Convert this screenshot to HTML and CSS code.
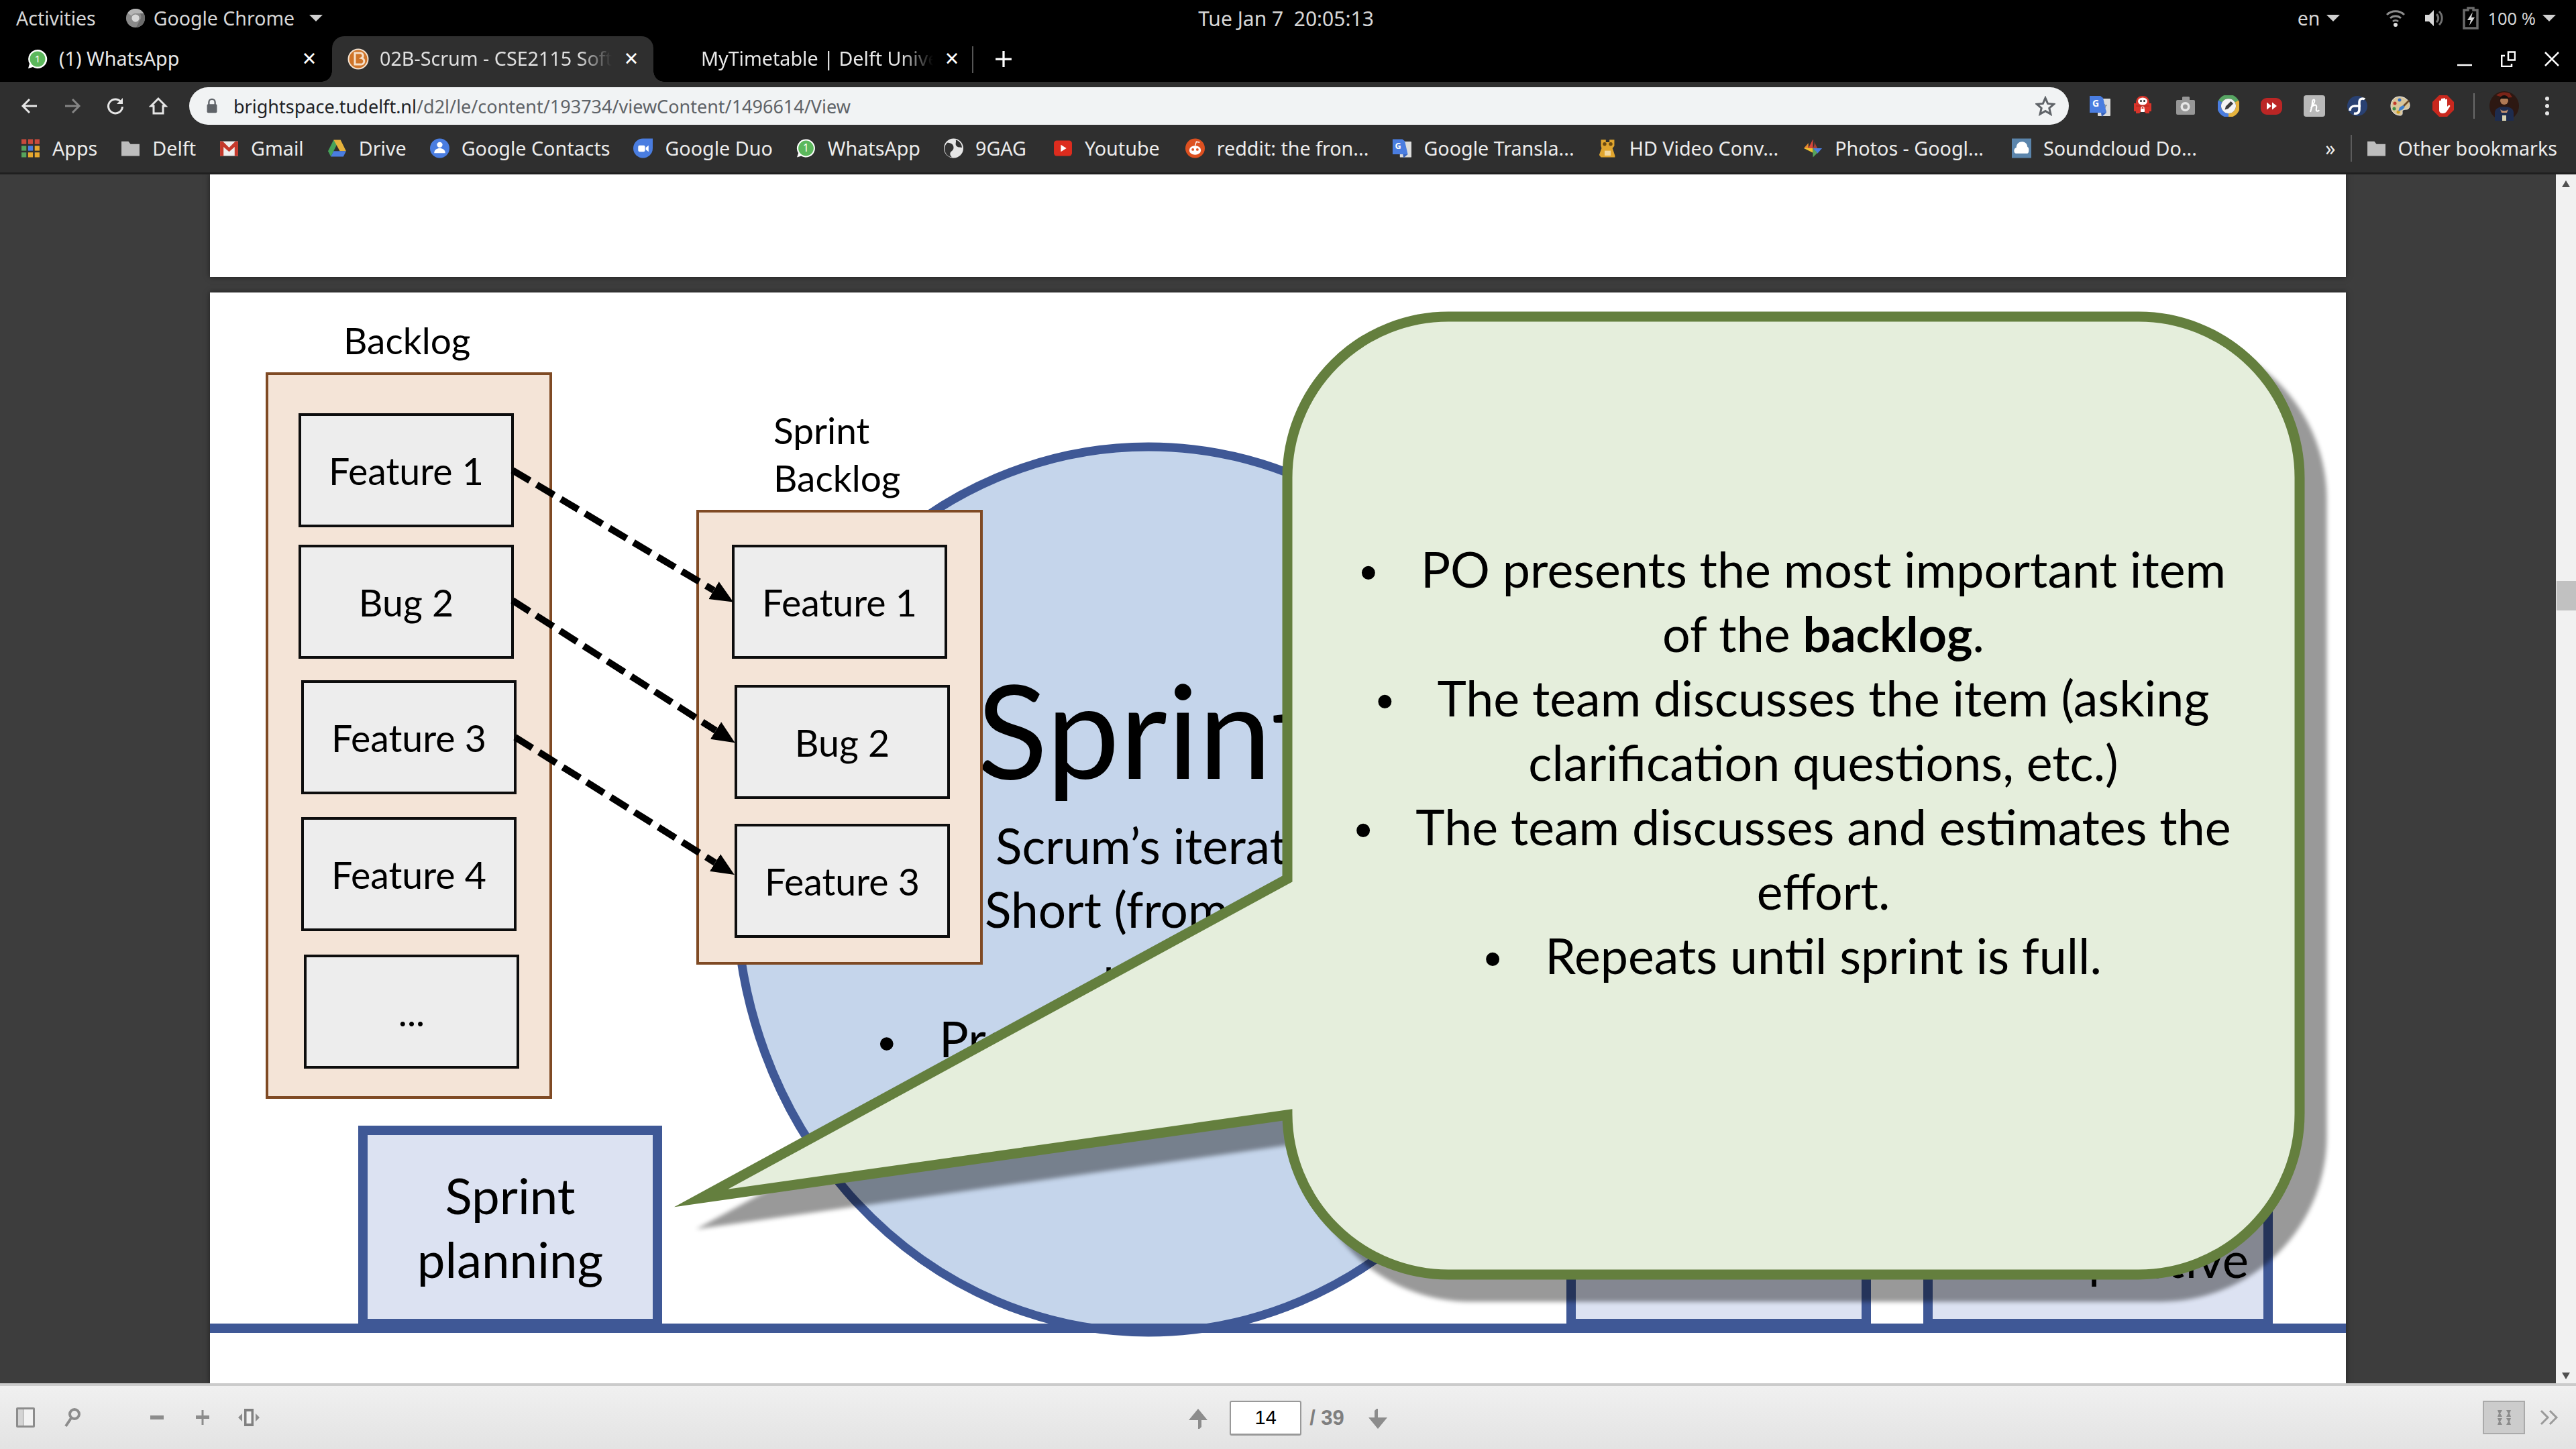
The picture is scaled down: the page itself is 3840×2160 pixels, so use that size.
FILE: index.html
```html
<!DOCTYPE html>
<html lang="en">
<head>
<meta charset="utf-8">
<title>02B-Scrum - CSE2115 Software</title>
<link rel="stylesheet" href="styles.css">
</head>
<body>
<header class="topbar">
  <div class="tb-left">
    <span class="tb-text">Activities</span>
    <span class="tb-app">
      <svg class="ic-chrome" viewBox="0 0 32 32"><circle cx="16" cy="16" r="15" fill="#8a8a8a"/><path d="M16 1a15 15 0 0 1 13 7.500H16a7.500 7.500 0 0 0-6.500 3.800L3.500 8A15 15 0 0 1 16 1z" fill="#b5b5b5"/><path d="M29 8.500A15 15 0 0 1 17 31l6-12a7.500 7.500 0 0 0 0-10.500z" fill="#6c6c6c"/><circle cx="16" cy="16" r="6" fill="#d8d8d8"/></svg>
      <span class="tb-text">Google Chrome</span><i class="tri"></i>
    </span>
  </div>
  <div class="tb-clock">Tue Jan 7&nbsp; 20:05:13</div>
  <div class="tb-right">
    <span class="tb-text">en</span><i class="tri tri-en"></i>
    <svg class="ic-wifi" viewBox="0 0 30 30"><path d="M2 10a19 19 0 0 1 26 0M7 15a12 12 0 0 1 16 0M11 20a6 6 0 0 1 8 0" fill="none" stroke="#8d8d8d" stroke-width="3"/><circle cx="15" cy="25" r="3" fill="#e0e0e0"/></svg>
    <svg class="ic-vol" viewBox="0 0 30 30"><path d="M3 10h6l7-7v24l-7-7H3z" fill="#d8d8d8"/><path d="M20 9a8 8 0 0 1 0 12M24 5a14 14 0 0 1 0 20" fill="none" stroke="#6f6f6f" stroke-width="3"/></svg>
    <svg class="ic-batt" viewBox="0 0 24 34"><path d="M8 2h8v3h6v27H2V5h6z" fill="none" stroke="#6a6a6a" stroke-width="3.500"/><path d="M15 8l-8 12h5l-2 8 8-12h-5z" fill="#d8d8d8"/></svg>
    <span class="tb-text tb-pct">100 %</span><i class="tri"></i>
  </div>
</header>

<nav class="tabstrip">
  <div class="tab tab-wa">
    <svg class="fav" viewBox="0 0 32 32"><path d="M16 2a14 14 0 0 0-12 21L2 30l7-2A14 14 0 1 0 16 2z" fill="#fff"/><circle cx="16" cy="16" r="11.500" fill="#5cb85c"/><text class="wa-one" x="16" y="21" text-anchor="middle">1</text></svg>
    <span class="tab-title">(1) WhatsApp</span>
    <span class="tab-x">×</span>
  </div>
  <div class="tab tab-active">
    <svg class="fav" viewBox="0 0 32 32"><circle cx="16" cy="16" r="15.500" fill="#f3e2d0"/><circle cx="16" cy="16" r="13.500" fill="#cf7429"/><path d="M11 7h8a4 4 0 0 1 2 7.500 4.500 4.500 0 0 1-2 9.500h-8z" fill="none" stroke="#f6dfc8" stroke-width="3"/></svg>
    <span class="tab-title fade">02B-Scrum - CSE2115 Software</span>
    <span class="tab-x">×</span>
  </div>
  <div class="tab tab-tt">
    <span class="tab-title fade">MyTimetable | Delft University</span>
    <span class="tab-x">×</span>
  </div>
  <i class="tab-sep"></i>
  <svg class="tab-plus" viewBox="0 0 24 24"><path d="M12 1v22M1 12h22" stroke="#fff" stroke-width="3"/></svg>
  <div class="win-ctl">
    <svg viewBox="0 0 22 24"><path d="M0 21h22" stroke="#fff" stroke-width="2.500"/></svg>
    <svg viewBox="0 0 22 24"><path d="M11 1.500h10v12H11zM6 7H1.200v16H16v-4" fill="none" stroke="#fff" stroke-width="2.500"/></svg>
    <svg viewBox="0 0 22 24"><path d="M1 2l20 20M21 2L1 22" stroke="#fff" stroke-width="2.500"/></svg>
  </div>
</nav>

<div class="toolbar">
  <svg class="nav" viewBox="0 0 28 28"><path d="M25 14H5M14 4L4 14l10 10" fill="none" stroke="#e6e6e6" stroke-width="3"/></svg>
  <svg class="nav" viewBox="0 0 28 28"><path d="M3 14h20M14 4l10 10-10 10" fill="none" stroke="#858585" stroke-width="3"/></svg>
  <svg class="nav" viewBox="0 0 28 28"><path d="M23 9a10.500 10.500 0 1 0 1.500 6" fill="none" stroke="#e6e6e6" stroke-width="3"/><path d="M25 2v9h-9z" fill="#e6e6e6"/></svg>
  <svg class="nav" viewBox="0 0 28 28"><path d="M14 3L3 14h4v11h14V14h4z" fill="none" stroke="#e6e6e6" stroke-width="3"/></svg>
  <div class="omni">
    <svg class="lock" viewBox="0 0 20 28"><path d="M5 12V8a5 5 0 0 1 10 0v4" fill="none" stroke="#5f6368" stroke-width="2.500"/><rect x="2" y="11" width="16" height="14" rx="2" fill="#5f6368"/></svg>
    <span class="url"><b>brightspace.tudelft.nl</b>/d2l/le/content/193734/viewContent/1496614/View</span>
    <svg class="star" viewBox="0 0 30 30"><path d="M15 3l3.600 8.400 9.100.800-6.900 6 2.100 8.900-7.900-4.700-7.900 4.700 2.100-8.900-6.900-6 9.100-.800z" fill="none" stroke="#5f6368" stroke-width="3"/></svg>
  </div>
  <div class="exts">
    <svg viewBox="0 0 32 32"><rect x="13" y="5" width="19" height="26" rx="1" fill="#dcdcdc"/><path d="M23 13v2M19 15h8M25 15c-1 5-4 8-6 9M20 18c1 3 4 5 6 6" fill="none" stroke="#8b939c" stroke-width="1.600"/><path d="M1 1h16l4 3 5 22-20 0H1z" fill="#4a7de0"/><path d="M18 26h8l-7 6z" fill="#3a63b8"/><text class="ext-g" x="5" y="17">G</text></svg>
    <svg viewBox="0 0 32 32"><path d="M16 1c-6 0-9 3-10 9v2H3v12h3v3h5l2-2h6l2 2h5v-3h3V12h-3v-2C25 4 22 1 16 1z" fill="#d8342a"/><ellipse cx="16" cy="9" rx="7" ry="5.500" fill="#fff"/><circle cx="13.500" cy="8.500" r="1.500" fill="#222"/><circle cx="18.500" cy="8.500" r="1.500" fill="#222"/><path d="M6 16h20" stroke="#a8241c" stroke-width="1"/><rect x="13" y="20" width="6" height="5" rx="1" fill="#fff"/><path d="M14 20v-1a2 2 0 0 1 4 0v1" fill="none" stroke="#fff" stroke-width="1.200"/></svg>
    <svg viewBox="0 0 32 32"><path d="M2 9a2 2 0 0 1 2-2h7V3a2 2 0 0 1 2-1h7a2 2 0 0 1 2 1v4h6a2 2 0 0 1 2 2v18a2 2 0 0 1-2 2H4a2 2 0 0 1-2-2z" fill="#979797"/><circle cx="15.500" cy="17" r="7" fill="#e6e6e6"/><circle cx="15.500" cy="17" r="3.500" fill="#979797"/></svg>
    <svg viewBox="0 0 32 32"><g fill="none" stroke-width="6"><path d="M3.800 9a14 14 0 0 1 24.400 0" stroke="#57a663"/><path d="M28.200 9A14 14 0 0 1 16 30" stroke="#e6b33c"/><path d="M16 30A14 14 0 0 1 3.800 9" stroke="#4a7de0"/></g><circle cx="16" cy="16" r="11" fill="#f4f4f4"/><path d="M10.500 21.500l1.500-5 7.500-7.500 3.500 3.500-7.500 7.500z" fill="#3b3b3b"/></svg>
    <svg viewBox="0 0 32 32"><rect x="0" y="4" width="32" height="25" rx="9" fill="#bb2625"/><path d="M9 10.500l7 5.500-7 5.500zM17 10.500l7 5.500-7 5.500z" fill="#fff"/></svg>
    <svg viewBox="0 0 32 32"><rect width="32" height="32" rx="4" fill="#b9b9b9"/><path d="M10 25c2-6 3-11 3-15 0-3 2-4 3-3 2 2-3 8-5 12 2-4 7-6 8-3 1 2-1 5 0 7 1 1 3 1 4-1" fill="none" stroke="#fff" stroke-width="2.200"/></svg>
    <svg viewBox="0 0 32 32"><circle cx="16" cy="16" r="15" fill="#294172"/><path d="M5 23c0-4 3-7 7-7h9M11 27c5 1 8-1 8-6V10c0-3 2-5 5-5 2 0 3 1 3 1" fill="none" stroke="#fff" stroke-width="3.600"/></svg>
    <svg viewBox="0 0 32 32"><path d="M15 2C6 2 2 9 2 16c0 9 7 14 14 14 4 0 3-4 3-6s3-3 6-3 5-2 5-6C30 8 23 2 15 2z" fill="#d9c59a" stroke="#eee" stroke-width="1"/><circle cx="15" cy="7" r="2.500" fill="#2f6cc4"/><circle cx="8" cy="12" r="2.500" fill="#c0392b"/><circle cx="7" cy="20" r="2.500" fill="#3d8f45"/><circle cx="13" cy="25" r="2.500" fill="#d0a020"/><path d="M28 7L20 15l2 2 8-8z" fill="#6b4a2a"/><path d="M20 15l-5 3-2 6 7-3 3-4z" fill="#3c7fd0"/></svg>
    <svg viewBox="0 0 32 32"><path d="M10 0h12l10 10v12L22 32H10L0 22V10z" fill="#c9281e"/><path d="M10 17V9a1.500 1.500 0 0 1 3 0V6a1.500 1.500 0 0 1 3 0v-.500a1.500 1.500 0 0 1 3 0V7a1.500 1.500 0 0 1 3 0v10l2-2c2-1 3 1 2 2l-4 6c-2 3-4 4-7 4-4 0-5-3-5-5z" fill="#fff"/></svg>
  </div>
  <i class="tool-sep"></i>
  <svg class="avatar" viewBox="0 0 44 44"><circle cx="22" cy="22" r="22" fill="#2d1812"/><path d="M10 6a20 20 0 0 1 20-3l4 6-12 1z" fill="#7a2418"/><path d="M8 44V32c0-6 6-9 14-9s14 3 14 9v12z" fill="#1e2c4e"/><circle cx="22" cy="14" r="6" fill="#b07a55"/><path d="M15 13a7 7 0 0 1 14 0l-2-2H17z" fill="#14100e"/><path d="M16 27c3 3 9 3 12 0l-2 5h-8z" fill="#c09070"/><rect x="19" y="36" width="6" height="8" fill="#d8d0b0"/></svg>
  <svg class="kebab" viewBox="0 0 8 32"><circle cx="4" cy="5" r="3" fill="#e6e6e6"/><circle cx="4" cy="16" r="3" fill="#e6e6e6"/><circle cx="4" cy="27" r="3" fill="#e6e6e6"/></svg>
</div>

<div class="bookmarks">
  <div class="bm bm-apps"><svg viewBox="0 0 28 28"><g fill="#c94a3c"><rect x="1" y="1" width="7" height="7"/><rect x="10.500" y="1" width="7" height="7"/><rect x="20" y="1" width="7" height="7"/></g><rect x="1" y="10.500" width="7" height="7" fill="#56a35c"/><rect x="10.500" y="10.500" width="7" height="7" fill="#4a7de0"/><rect x="20" y="10.500" width="7" height="7" fill="#e6a72e"/><rect x="1" y="20" width="7" height="7" fill="#56a35c"/><rect x="10.500" y="20" width="7" height="7" fill="#e6a72e"/><rect x="20" y="20" width="7" height="7" fill="#e6a72e"/></svg><span>Apps</span></div>
  <div class="bm bm-delft"><svg viewBox="0 0 28 28"><path d="M1 4h10l3 4h13v17H1z" fill="#bdbdbd"/></svg><span>Delft</span></div>
  <div class="bm bm-gmail"><svg viewBox="0 0 28 28"><rect x="1" y="4" width="26" height="21" fill="#eee"/><path d="M1 4h4l9 9 9-9h4v21h-5V12l-8 7-8-7v13H1z" fill="#c4392c"/></svg><span>Gmail</span></div>
  <div class="bm bm-drive"><svg viewBox="0 0 28 28"><path d="M9 2L1 18l4 8 9-18z" fill="#46a35a"/><path d="M9 2h10l8 16h-9z" fill="#e6b33c"/><path d="M5 26l4-8h18l-4 8z" fill="#4a7de0"/></svg><span>Drive</span></div>
  <div class="bm bm-contacts"><svg viewBox="0 0 28 28"><circle cx="14" cy="14" r="14" fill="#4a7de0"/><circle cx="14" cy="9" r="4" fill="#fff"/><path d="M6 21c0-5 4-7 8-7s8 2 8 7z" fill="#fff"/></svg><span>Google Contacts</span></div>
  <div class="bm bm-duo"><svg viewBox="0 0 28 28"><path d="M14 0h14v14a14 14 0 1 1-14-14z" fill="#4a7de0"/><rect x="7" y="10" width="10" height="9" rx="2" fill="#fff"/><path d="M18 13l4-3v9l-4-3z" fill="#fff"/></svg><span>Google Duo</span></div>
  <div class="bm bm-wa"><svg viewBox="0 0 28 28"><path d="M14 1A13 13 0 0 0 3 21L1 27l6-2A13 13 0 1 0 14 1z" fill="#fff"/><circle cx="14" cy="14" r="11" fill="#5cb85c"/><text class="wa-one" x="14" y="19" text-anchor="middle">1</text></svg><span>WhatsApp</span></div>
  <div class="bm bm-gag"><svg viewBox="0 0 28 28"><circle cx="14" cy="14" r="14" fill="#e6e6e6"/><path d="M5 6c5 0 9 2 9 7s-5 5-5 9c0 2 1 4 3 5-7-1-11-6-11-13 0-3 2-6 4-8zM17 2c5 1 9 6 9 11-4 0-9-1-9-5 0-2 1-4 0-6z" fill="#333"/></svg><span>9GAG</span></div>
  <div class="bm bm-yt"><svg viewBox="0 0 28 28"><rect x="1" y="3" width="26" height="22" rx="4" fill="#dd2c1e"/><path d="M11 9l8 5-8 5z" fill="#fff"/></svg><span>Youtube</span></div>
  <div class="bm bm-red"><svg viewBox="0 0 30 30"><circle cx="15" cy="15" r="15" fill="#dd5020"/><ellipse cx="15" cy="18" rx="9" ry="7" fill="#fff"/><circle cx="11.500" cy="17" r="2" fill="#dd5020"/><circle cx="18.500" cy="17" r="2" fill="#dd5020"/><path d="M15 11l2-6 5 1" fill="none" stroke="#fff" stroke-width="1.500"/></svg><span>reddit: the fron...</span></div>
  <div class="bm bm-trans"><svg viewBox="0 0 32 32"><rect x="13" y="5" width="19" height="26" rx="1" fill="#dcdcdc"/><path d="M1 1h16l4 3 5 22-20 0H1z" fill="#4a7de0"/><path d="M18 26h8l-7 6z" fill="#3a63b8"/><text class="ext-g" x="5" y="17">G</text></svg><span>Google Transla...</span></div>
  <div class="bm bm-hd"><svg viewBox="0 0 32 32"><path d="M5 2h8v4h6V2h8v10l-3 4 4 12v3H5l-3-4 4-11-1-4z" fill="#e0a52e"/><circle cx="11" cy="9" r="3" fill="#6b4a10"/><circle cx="21" cy="9" r="3" fill="#6b4a10"/><rect x="11" y="20" width="10" height="8" fill="#f2d8a0"/></svg><span>HD Video Conv...</span></div>
  <div class="bm bm-photos"><svg viewBox="0 0 30 30"><path d="M15 1v14H8z" fill="#d9473a"/><path d="M1 15h14v7z" fill="#f0c330"/><path d="M15 15h14l-7 8z" fill="#4a7de0"/><path d="M15 15v14l7-7z" fill="#56a35c"/><path d="M15 1c3 4 3 9 0 14H22z" fill="#d9473a" opacity=".7"/><path d="M8 15L1 15l7-8z" fill="#e88a2e"/></svg><span>Photos - Googl...</span></div>
  <div class="bm bm-sc"><svg viewBox="0 0 30 30"><rect width="30" height="30" fill="#5b85ac"/><path d="M6 23c-3 0-4-8 1-9 0-6 4-9 9-9s8 4 8 8c3 0 3 10 0 10z" fill="#fff"/></svg><span>Soundcloud Do...</span></div>
  <span class="bm-more">»</span>
  <i class="bm-sep"></i>
  <div class="bm bm-other"><svg viewBox="0 0 28 28"><path d="M1 4h10l3 4h13v17H1z" fill="#bdbdbd"/></svg><span>Other bookmarks</span></div>
</div>

<main class="viewer">
  <div class="pages">
    <div class="page page-prev"></div>
    <section class="page slide">
      <svg class="layer" viewBox="313 436 3184 1626">
        <ellipse class="sprint-circle" cx="1712" cy="1326" rx="615" ry="660"/>
      </svg>

      <div class="sprint-title">Sprint</div>
      <div class="sprint-line line-scrum">Scrum’s iterative cycle</div>
      <div class="sprint-line line-short">Short (from 1 to 4 weeks)</div>
      <div class="sprint-line line-tick">l</div>
      <div class="sprint-line line-pr"><span class="b">Product increment</span></div>

      <div class="label label-backlog">Backlog</div>
      <div class="label label-sprint">Sprint<br>Backlog</div>

      <div class="column col-backlog"></div>
      <div class="column col-sprint"></div>

      <div class="item i1">Feature 1</div>
      <div class="item i2">Bug 2</div>
      <div class="item i3">Feature 3</div>
      <div class="item i4">Feature 4</div>
      <div class="item i5">...</div>
      <div class="item s1">Feature 1</div>
      <div class="item s2">Bug 2</div>
      <div class="item s3">Feature 3</div>

      <svg class="layer" viewBox="313 436 3184 1626">
        <defs>
          <marker id="head" markerUnits="userSpaceOnUse" markerWidth="34" markerHeight="34" refX="0" refY="17" orient="auto"><path d="M0 2L34 17 0 32z" fill="#000"/></marker>
        </defs>
        <path class="arrow" d="M764 701L1064 880" marker-end="url(#head)"/>
        <path class="arrow" d="M764 895L1067 1089" marker-end="url(#head)"/>
        <path class="arrow" d="M768 1099L1066 1286" marker-end="url(#head)"/>
      </svg>

      <div class="phase ph-plan">Sprint<br>planning</div>
      <div class="phase ph-review">Sprint<br>Review</div>
      <div class="phase ph-retro">Sprint<br>Retrospective</div>

      <div class="baseline"></div>

      <svg class="layer callout" viewBox="313 436 3184 1626">
        <path class="callout-shape" d="M2159 472H3188A240 240 0 0 1 3428 712V1660A240 240 0 0 1 3188 1900H2159A240 240 0 0 1 1919 1662L1045 1786 1919 1310V712A240 240 0 0 1 2159 472Z"/>
      </svg>

      <div class="callout-text">
        <p><span class="b">PO presents the most important item</span><br>of the <strong>backlog</strong>.</p>
        <p><span class="b">The team discusses the item (asking</span><br>clarification questions, etc.)</p>
        <p><span class="b">The team discusses and estimates the</span><br>effort.</p>
        <p><span class="b">Repeats until sprint is full.</span></p>
      </div>
    </section>
  </div>
  <aside class="scrollbar">
    <i class="sb-up"></i>
    <i class="sb-thumb"></i>
    <i class="sb-down"></i>
  </aside>
</main>

<footer class="pdfbar">
  <div class="pb-left">
    <svg class="pb-sidebar" viewBox="0 0 28 30"><rect width="28" height="30" rx="2" fill="#8c8c8c"/><rect x="3" y="3" width="7" height="24" fill="#d4d4d4"/><rect x="11" y="3" width="14" height="24" fill="#f2f2f2"/></svg>
    <svg class="pb-search" viewBox="0 0 26 30"><circle cx="16" cy="10" r="7" fill="none" stroke="#8c8c8c" stroke-width="4"/><path d="M11 16L3 28" stroke="#8c8c8c" stroke-width="4"/></svg>
    <svg class="pb-minus" viewBox="0 0 20 20"><rect y="7" width="20" height="6" fill="#8c8c8c"/></svg>
    <svg class="pb-plus" viewBox="0 0 20 22"><path d="M0 8h20v5H0z" fill="#8c8c8c"/><path d="M8.500 0h3v22h-3z" fill="#8c8c8c"/></svg>
    <svg class="pb-fit" viewBox="0 0 32 26"><path d="M0 13l6-6v12zM32 13l-6-6v12z" fill="#8c8c8c"/><rect x="9" y="0" width="14" height="26" fill="#808080"/><rect x="12.500" y="4" width="7" height="18" fill="#f2f2f2"/></svg>
  </div>
  <div class="pb-center">
    <svg class="pb-arrow" viewBox="0 0 30 30"><path d="M15 0l14 17h-9v10l-3 3h-2V17H1z" fill="#8c8c8c"/></svg>
    <span class="pb-input">14</span>
    <span class="pb-count">/ 39</span>
    <svg class="pb-arrow" viewBox="0 0 30 30"><path d="M15 30L1 13h9V3L13 0h2v13h14z" fill="#8c8c8c"/></svg>
  </div>
  <div class="pb-right">
    <span class="pb-present"><svg viewBox="0 0 30 30"><path d="M5 4h7l-3 5 3 5H5l2-5zM25 4h-7l3 5-3 5h7l-2-5zM5 26h7l-3-5 3-5H5l2 5zM25 26h-7l3-5-3-5h7l-2 5z" fill="#8c8c8c"/></svg></span>
    <svg class="pb-more" viewBox="0 0 30 24"><path d="M2 2l10 10L2 22M15 2l10 10-10 10" fill="none" stroke="#9a9a9a" stroke-width="3"/></svg>
  </div>
</footer>
</body>
</html>
```

FILE: styles.css
```css
* { box-sizing: border-box; }
html, body { margin: 0; padding: 0; }
body {
  width: 3840px;
  height: 2160px;
  overflow: hidden;
  display: flex;
  flex-direction: column;
  background: #000;
  font-family: "Noto Sans", "Open Sans", sans-serif;
}
i { display: block; font-style: normal; }
svg { display: block; flex: none; }

/* GNOME top bar */
.topbar {
  height: 54px;
  flex: none;
  background: #000;
  color: #d6d6d6;
  display: grid;
  grid-template-columns: 1fr auto 1fr;
  align-items: center;
  padding: 0 30px 0 24px;
  font-size: 28.500px;
}
.tb-text { white-space: nowrap; }
.tb-left, .tb-right, .tb-app { display: flex; align-items: center; }
.tb-left { gap: 44px; }
.tb-app { gap: 12px; }
.ic-chrome { width: 30px; height: 30px; }
.tri {
  width: 0; height: 0;
  border-left: 10px solid transparent;
  border-right: 10px solid transparent;
  border-top: 10px solid #d0d0d0;
  margin-left: 10px;
}
.tb-clock { font-size: 30px; white-space: nowrap; }
.tb-right { justify-content: flex-end; }
.tri-en { margin-right: 68px; }
.ic-wifi { width: 30px; height: 30px; margin-right: 25px; }
.ic-vol { width: 32px; height: 30px; margin-right: 28px; }
.ic-batt { width: 24px; height: 34px; margin-right: 13px; }
.tb-pct { font-size: 25.500px; }

/* Tab strip */
.tabstrip {
  height: 68px;
  flex: none;
  background: #000;
  display: flex;
  align-items: stretch;
  padding-left: 40px;
  color: #e8e8e8;
  font-size: 28.700px;
}
.tab { position: relative; display: flex; align-items: center; }
.tab-wa { width: 455px; }
.tab-active {
  width: 479px;
  background: #2f2f2f;
  border-radius: 18px 18px 0 0;
  padding-left: 23px;
  color: #e0e0e0;
}
.tab-active::before, .tab-active::after {
  content: "";
  position: absolute;
  bottom: 0;
  width: 16px;
  height: 16px;
}
.tab-active::before { left: -16px; background: radial-gradient(circle at 0 0, #000 15.500px, #2f2f2f 16px); }
.tab-active::after { right: -16px; background: radial-gradient(circle at 100% 0, #000 15.500px, #2f2f2f 16px); }
.tab-tt { width: 477px; padding-left: 71px; }
.fav { width: 32px; height: 32px; margin-right: 16px; }
.wa-one { font-family: "Noto Sans", sans-serif; font-size: 15px; fill: #fff; }
.ext-g { font-family: "Noto Sans", sans-serif; font-size: 14px; font-weight: 700; fill: #fff; }
.tab-title { white-space: nowrap; overflow: hidden; margin-top: -3px; line-height: 40px; }
.tab-wa .tab-title { width: 359px; }
.tab-active .tab-title { width: 346px; }
.tab-tt .tab-title { width: 346px; }
.fade { -webkit-mask-image: linear-gradient(90deg, #000 86%, transparent 100%); mask-image: linear-gradient(90deg, #000 86%, transparent 100%); }
.tab-x { font-size: 36px; line-height: 1; color: #fff; width: 28px; text-align: center; margin-top: -3px; }
.tab-active .tab-x { margin-left: 15px; }
.tab-tt .tab-x { margin-left: 14px; }
.tab-sep { width: 2px; height: 40px; background: #555; align-self: center; margin: 2px 0 0 -2px; }
.tab-plus { width: 26px; height: 26px; align-self: center; margin-left: 32px; }
.win-ctl { margin-left: auto; display: flex; align-items: center; gap: 43px; padding-right: 25px; }
.win-ctl svg { width: 22px; height: 24px; }

/* Toolbar */
.toolbar {
  height: 64px;
  flex: none;
  background: #2f2f2f;
  display: flex;
  align-items: center;
  padding: 8px 0 0 30px;
}
.nav { width: 28px; height: 28px; margin-right: 36px; }
.omni {
  margin-left: -4px;
  width: 2802px;
  height: 56px;
  background: #f1f3f4;
  border-radius: 28px;
  display: flex;
  align-items: center;
  padding-left: 24px;
}
.lock { width: 20px; height: 26px; margin-right: 22px; }
.url { font-size: 27px; color: #5f6368; white-space: nowrap; }
.url b { font-weight: 400; color: #202124; }
.star { width: 30px; height: 30px; margin-left: auto; margin-right: 20px; }
.exts { display: flex; margin-left: 30px; gap: 32px; }
.exts svg { width: 32px; height: 32px; }
.tool-sep { width: 2px; height: 38px; background: #6a6a6a; margin-left: 29px; }
.avatar { width: 44px; height: 44px; margin-left: 22px; }
.kebab { width: 8px; height: 32px; margin-left: 38px; }

/* Bookmark bar */
.bookmarks {
  height: 74px;
  flex: none;
  background: #2f2f2f;
  border-bottom: 3px solid #1f1f1f;
  padding: 0 0 2px 31px;
  display: flex;
  align-items: center;
  color: #ececec;
  font-size: 28.700px;
  white-space: nowrap;
}
.bm { display: flex; align-items: center; gap: 18px; margin-right: 35px; }
.bm svg { width: 29px; height: 30px; }
.bm-gag { margin-right: 40px; }
.bm-yt { margin-right: 38px; }
.bm-hd { margin-right: 37px; }
.bm-photos { margin-right: 42px; }
.bm-more { margin-left: auto; font-size: 30px; line-height: 1; margin-right: 22px; }
.bm-sep { width: 2px; height: 40px; background: #5c5c5c; margin-right: 22px; }
.bm-other { margin-right: 28px; }

/* Viewer */
.viewer {
  flex: 1;
  min-height: 0;
  display: flex;
  background: #3d3d3d;
  overflow: hidden;
}
.pages {
  flex: 1;
  display: flex;
  flex-direction: column;
  align-items: center;
  gap: 23px;
}
.page {
  width: 3184px;
  background: #fff;
  flex: none;
  box-shadow: 0 0 8px rgba(0,0,0,.5);
}
.page-prev { height: 153px; }
.slide {
  position: relative;
  height: 1626px;
  overflow: hidden;
  font-family: Lato, "Liberation Sans", sans-serif;
  color: #000;
}
.layer { position: absolute; left: 0; top: 0; width: 3184px; height: 1626px; overflow: visible; }
.sprint-circle { fill: #c5d5eb; stroke: #3f5896; stroke-width: 13; }
.sprint-title { position: absolute; left: 1143px; top: 530px; font-size: 195px; line-height: 240px; white-space: nowrap; }
.sprint-line { position: absolute; font-size: 73px; line-height: 96px; white-space: nowrap; }
.line-scrum { left: 1171px; top: 776px; }
.line-short { left: 1155px; top: 871px; }
.line-tick { left: 1331px; top: 984px; }
.line-pr { left: 1087px; top: 1064px; }
.b { position: relative; }
.b::before { content: "•"; font-family: "Liberation Sans", sans-serif; position: absolute; left: -91px; top: 3px; }
.label { position: absolute; font-size: 55px; line-height: 71px; white-space: nowrap; }
.label-backlog { left: 199px; top: 36px; }
.label-sprint { left: 840px; top: 170px; }
.column { position: absolute; background: #f4e4d7; border: 4px solid #7f4a24; }
.col-backlog { left: 83px; top: 119px; width: 427px; height: 1083px; }
.col-sprint { left: 725px; top: 324px; width: 427px; height: 678px; }
.item {
  position: absolute;
  width: 321px;
  height: 170px;
  background: #ededed;
  border: 4px solid #0d0d0d;
  display: flex;
  align-items: center;
  justify-content: center;
  font-size: 55.500px;
  white-space: nowrap;
}
.i1 { left: 132px; top: 180px; }
.i2 { left: 132px; top: 376px; }
.i3 { left: 136px; top: 578px; }
.i4 { left: 136px; top: 782px; }
.i5 { left: 140px; top: 987px; }
.s1 { left: 778px; top: 376px; }
.s2 { left: 782px; top: 585px; }
.s3 { left: 782px; top: 792px; }
.arrow { fill: none; stroke: #000; stroke-width: 10; stroke-dasharray: 30 12; }
.phase {
  position: absolute;
  top: 1242px;
  height: 302px;
  background: #dce2f2;
  border: 14px solid #3f5896;
  display: flex;
  align-items: center;
  justify-content: center;
  text-align: center;
  font-size: 74.500px;
  line-height: 95px;
  white-space: nowrap;
}
.ph-plan { left: 221px; width: 453px; }
.ph-review { left: 2022px; width: 454px; }
.ph-retro { left: 2554px; width: 521px; }
.baseline { position: absolute; left: 0; top: 1537px; width: 3184px; height: 14px; background: #3f5896; }
.callout-shape {
  fill: #e5eedc;
  stroke: #647f3e;
  stroke-width: 15;
  stroke-linejoin: miter;
  stroke-miterlimit: 20;
}
.callout { filter: drop-shadow(33px 33px 3px rgba(0,0,0,.4)); }
.callout-text {
  position: absolute;
  left: 1613px;
  top: 364px;
  width: 1584px;
  text-align: center;
  font-size: 73.600px;
  line-height: 96px;
}
.callout-text p { margin: 0; }
.callout-text strong { font-weight: 700; }

/* Scrollbar */
.scrollbar { width: 30px; flex: none; background: #f1f1f1; position: relative; }
.sb-up, .sb-down {
  position: absolute;
  left: 9px;
  width: 0; height: 0;
  border-left: 6px solid transparent;
  border-right: 6px solid transparent;
}
.sb-up { top: 9px; border-bottom: 10px solid #505050; }
.sb-down { bottom: 6px; border-top: 10px solid #505050; }
.sb-thumb { position: absolute; left: 1px; width: 29px; top: 606px; height: 44px; background: #c1c1c1; }

/* PDF toolbar */
.pdfbar {
  height: 98px;
  flex: none;
  border-top: 4px solid #cbcbcb;
  background: linear-gradient(#f0f0f0, #e3e3e3);
  display: grid;
  grid-template-columns: 1fr auto 1fr;
  align-items: center;
}
.pb-left, .pb-center, .pb-right { display: flex; align-items: center; }
.pb-left { padding-left: 24px; }
.pb-sidebar { width: 28px; height: 30px; margin-right: 43px; }
.pb-search { width: 26px; height: 30px; margin-right: 103px; }
.pb-minus { width: 20px; height: 20px; margin-right: 48px; }
.pb-plus { width: 20px; height: 22px; margin-right: 43px; }
.pb-fit { width: 32px; height: 26px; }
.pb-center { padding-top: 2px; }
.pb-arrow { width: 30px; height: 30px; margin-top: 2px; }
.pb-input {
  width: 107px;
  height: 52px;
  margin: 0 12px 0 32px;
  background: #fff;
  border: 2px solid #999;
  border-bottom-width: 3px;
  border-radius: 3px;
  display: flex;
  align-items: center;
  justify-content: center;
  font-family: "Liberation Sans", sans-serif;
  font-size: 29px;
  color: #000;
}
.pb-count {
  font-family: "Liberation Sans", sans-serif;
  font-size: 31px;
  font-weight: 700;
  color: #7f7f7f;
  margin-right: 35px;
  white-space: nowrap;
}
.pb-right { justify-content: flex-end; padding-right: 24px; }
.pb-present {
  width: 63px;
  height: 50px;
  background: #ccc;
  border: 2px solid #aaa;
  display: flex;
  align-items: center;
  justify-content: center;
  margin-right: 22px;
}
.pb-present svg { width: 30px; height: 30px; }
.pb-more { width: 30px; height: 24px; }
```
